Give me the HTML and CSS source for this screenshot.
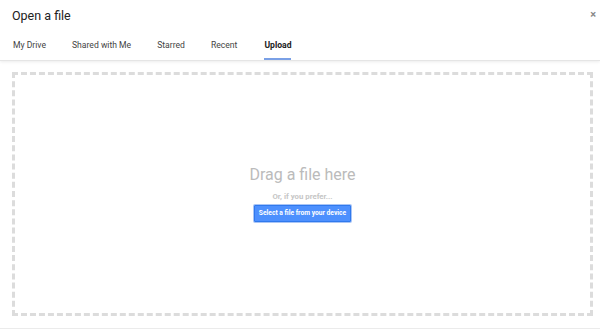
FILE: index.html
```html
<!DOCTYPE html>
<html lang="en">
<head>
    <meta charset="UTF-8">
    <title>Open a file</title>
    <link rel="stylesheet" href="styles.css">
</head>
<body>
    <div class="picker">
        <div class="picker-header">
            <div class="title-row">
                <h1>Open a file</h1>
                <span class="close-btn">&times;</span>
            </div>
            <nav class="tabs">
                <span class="tab">My Drive</span>
                <span class="tab">Shared with Me</span>
                <span class="tab">Starred</span>
                <span class="tab">Recent</span>
                <span class="tab active">Upload</span>
            </nav>
        </div>
        <div class="upload-area">
            <div class="drop-zone">
                <div class="drop-title">Drag a file here</div>
                <div class="drop-sub">Or, if you prefer...</div>
                <button type="button" class="select-btn">Select a file from your device</button>
            </div>
        </div>
    </div>
</body>
</html>
```

FILE: styles.css
```css
body {
    margin: 0;
    font-family: Roboto, 'Liberation Sans', sans-serif;
    background: #fff;
}

.picker {
    width: 600px;
    height: 329px;
    display: flex;
    flex-direction: column;
    border-bottom: 1px solid #ebebeb;
    box-sizing: border-box;
}

.picker-header {
    border-bottom: 1px solid #e5e5e5;
    box-shadow: 0 1px 3px rgba(0, 0, 0, 0.08);
}

.title-row {
    display: flex;
    justify-content: space-between;
    align-items: center;
    padding: 5px 4px 0 12px;
    height: 20px;
}

h1 {
    margin: 0;
    font-size: 12.5px;
    font-weight: 400;
    color: #222;
}

.close-btn {
    color: #888;
    font-size: 11px;
    font-weight: 700;
    margin-top: -2px;
}

.tabs {
    display: flex;
    padding: 15px 0 0 13px;
}

.tab {
    font-size: 8.6px;
    color: #444;
    padding-bottom: 8px;
    margin-right: 26px;
    border-bottom: 2px solid transparent;
}

.tab:first-child {
    margin-left: 0;
}

.tab.active {
    color: #222;
    font-weight: 700;
    border-bottom-color: #7aa0e6;
    margin-left: 1px;
}

.upload-area {
    flex: 1;
    padding: 11px 7px 12px 12px;
}

.drop-zone {
    height: 100%;
    box-sizing: border-box;
    border: 3px dashed #dcdcdc;
    display: flex;
    flex-direction: column;
    align-items: center;
    justify-content: center;
    padding-bottom: 2px;
}

.drop-title {
    font-size: 16px;
    color: #bbb;
}

.drop-sub {
    font-size: 7.8px;
    font-weight: 700;
    color: #c6c6c6;
    margin-top: 8px;
}

.select-btn {
    margin-top: 4px;
    background: #4d90fe;
    border: 1px solid #3079ed;
    box-shadow: 0 0 0 1px #a9c5f6;
    color: #fff;
    font-family: inherit;
    font-size: 6.7px;
    font-weight: 700;
    padding: 3.5px 4px;
    border-radius: 1px;
}
```
